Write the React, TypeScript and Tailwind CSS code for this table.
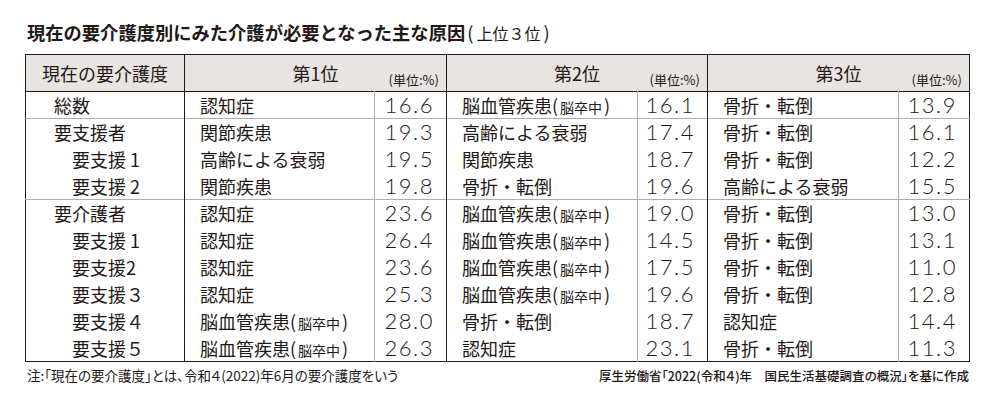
import React from 'react';

type Cause = [string, string];

type Row = {
  label: string;
  sub?: boolean;
  line?: boolean;
  causes: Cause[];
};

const STROKE = 'stroke';
const FALL = '骨折・転倒';

const rows: Row[] = [
  { label: '総数', line: true, causes: [['認知症', '16.6'], [STROKE, '16.1'], [FALL, '13.9']] },
  { label: '要支援者', causes: [['関節疾患', '19.3'], ['高齢による衰弱', '17.4'], [FALL, '16.1']] },
  { label: '要支援 1', sub: true, causes: [['高齢による衰弱', '19.5'], ['関節疾患', '18.7'], [FALL, '12.2']] },
  { label: '要支援 2', sub: true, line: true, causes: [['関節疾患', '19.8'], [FALL, '19.6'], ['高齢による衰弱', '15.5']] },
  { label: '要介護者', causes: [['認知症', '23.6'], [STROKE, '19.0'], [FALL, '13.0']] },
  { label: '要支援 1', sub: true, causes: [['認知症', '26.4'], [STROKE, '14.5'], [FALL, '13.1']] },
  { label: '要支援2', sub: true, causes: [['認知症', '23.6'], [STROKE, '17.5'], [FALL, '11.0']] },
  { label: '要支援３', sub: true, causes: [['認知症', '25.3'], [STROKE, '19.6'], [FALL, '12.8']] },
  { label: '要支援４', sub: true, causes: [[STROKE, '28.0'], [FALL, '18.7'], ['認知症', '14.4']] },
  { label: '要支援５', sub: true, causes: [[STROKE, '26.3'], ['認知症', '23.1'], [FALL, '11.3']] },
];

const CauseName = ({ name }: { name: string }) =>
  name === STROKE ? (
    <>
      脳血管疾患(<span className="text-[14px] mx-[2px]">脳卒中</span>)
    </>
  ) : (
    <>{name}</>
  );

const HeadGroup = ({ title }: { title: string }) => (
  <th
    colSpan={2}
    className="border-l-[1.5px] border-[#231815] p-0 font-normal">
    <div className="grid grid-cols-[1fr_auto_1fr] h-[36px]">
      <div />
      <div className="self-center text-[18px]">{title}</div>
      <div className="justify-self-end self-end pb-[5px] pr-[7px] text-[13px] leading-none">
        (単位:%)
      </div>
    </div>
  </th>
);

const App = () => {
  return (
    <div
      className="w-[1000px] h-[400px] bg-white text-[#231815] pl-[25px] pr-[31px] pt-[20px] font-['Noto_Sans_CJK_JP',sans-serif]">
      <div className="text-[18.3px] leading-[24px] pl-[2px]">
        <span className="font-bold">現在の要介護度別にみた介護が必要となった主な原因</span>
        <span className="ml-[2px]">(<span className="text-[16px] mx-[3px]">上位３位</span>)</span>
      </div>

      <table className="mt-[9px] w-[944px] table-fixed border-collapse border-[1.5px] border-[#231815]">
        <colgroup>
          <col className="w-[159px]" />
          <col className="w-[190px]" />
          <col className="w-[72px]" />
          <col className="w-[191px]" />
          <col className="w-[70px]" />
          <col className="w-[191px]" />
          <col className="w-[71px]" />
        </colgroup>
        <thead>
          <tr className="bg-[#e8e4e1] border-b-[1.5px] border-[#231815]">
            <th className="p-0 text-[18px] font-normal h-[36px]">現在の要介護度</th>
            <HeadGroup title="第1位" />
            <HeadGroup title="第2位" />
            <HeadGroup title="第3位" />
          </tr>
        </thead>
        <tbody>
          {rows.map((row, i) => (
            <tr
              key={i}
              className={row.line ? 'border-b border-[#b0adab]' : ''}>
              <td
                className={
                  row.sub
                    ? 'pl-[46px] h-[27px] text-[18px] leading-none'
                    : 'pl-[28px] h-[27px] text-[18px] leading-none'
                }>
                {row.label}
              </td>
              {row.causes.map(([name, value], j) => (
                <React.Fragment key={j}>
                  <td className="border-l-[1.5px] border-[#231815] pl-[15px] text-[18px] leading-none whitespace-nowrap">
                    <CauseName name={name} />
                  </td>
                  <td className="border-l border-[#b0adab] pr-[12px] text-right text-[22px] leading-none tracking-[1.5px] font-['Lato',sans-serif] font-light">
                    {value}
                  </td>
                </React.Fragment>
              ))}
            </tr>
          ))}
        </tbody>
      </table>

      <div className="mt-[3px] flex justify-between items-baseline w-[944px]">
        <div className="text-[13.5px] leading-[20px] pl-[2px] [font-feature-settings:'palt']">
          注:「現在の要介護度」とは、令和４(2022)年6月の要介護度をいう
        </div>
        <div className="text-[12.5px] leading-[16px] font-medium [font-feature-settings:'palt']">
          厚生労働省「2022(令和４)年　国民生活基礎調査の概況」を基に作成
        </div>
      </div>
    </div>
  );
};

export default App;
